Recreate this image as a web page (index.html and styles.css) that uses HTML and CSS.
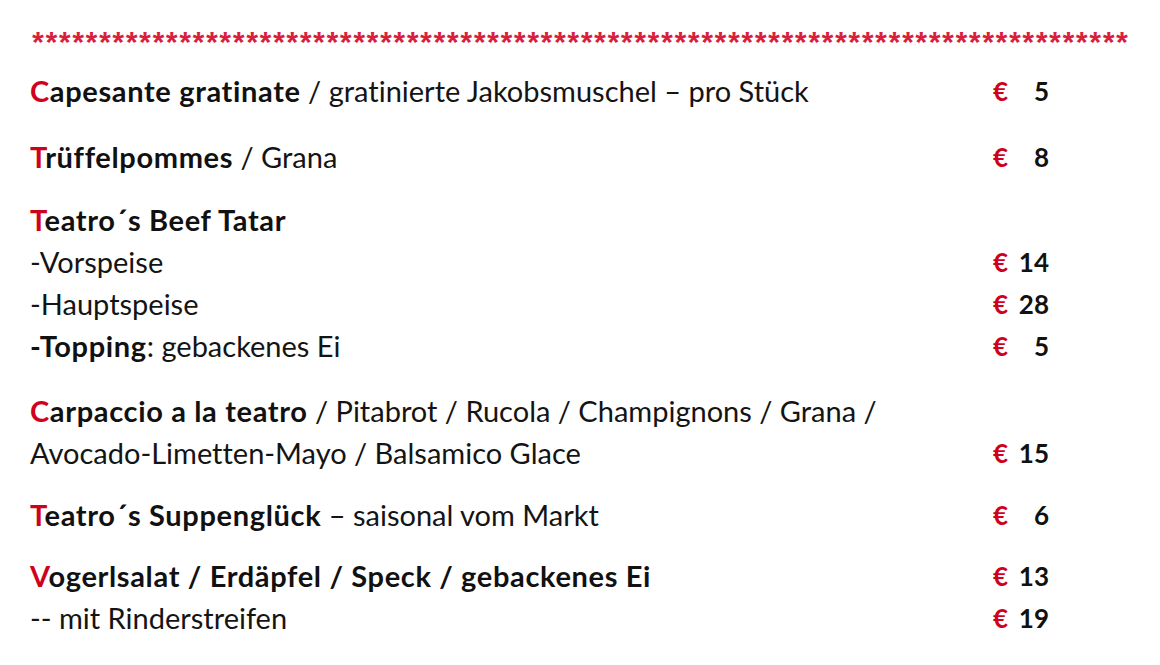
FILE: index.html
```html
<!DOCTYPE html>
<html lang="de">
<head>
<meta charset="utf-8">
<link rel="stylesheet" href="styles.css">
</head>
<body>
<div class="page">
  <div class="stars">**********************************************************************************</div>
  <div class="menu">
    <div class="item g1">
      <div class="row"><span class="name"><b><span class="ini">C</span>apesante gratinate</b> / gratinierte Jakobsmuschel – pro Stück</span><span class="price"><span class="eur">€</span><span class="num">5</span></span></div>
    </div>
    <div class="item g2">
      <div class="row"><span class="name"><b><span class="ini">T</span>rüffelpommes</b> / Grana</span><span class="price"><span class="eur">€</span><span class="num">8</span></span></div>
    </div>
    <div class="item g3">
      <div class="row"><span class="name"><b><span class="ini">T</span>eatro´s Beef Tatar</b></span></div>
      <div class="row"><span class="name">-Vorspeise</span><span class="price"><span class="eur">€</span><span class="num">14</span></span></div>
      <div class="row"><span class="name">-Hauptspeise</span><span class="price"><span class="eur">€</span><span class="num">28</span></span></div>
      <div class="row"><span class="name"><b>-Topping</b>: gebackenes Ei</span><span class="price"><span class="eur">€</span><span class="num">5</span></span></div>
    </div>
    <div class="item g4">
      <div class="row"><span class="name"><b><span class="ini">C</span>arpaccio a la teatro</b> / Pitabrot / Rucola / Champignons / Grana /</span></div>
      <div class="row"><span class="name">Avocado-Limetten-Mayo / Balsamico Glace</span><span class="price"><span class="eur">€</span><span class="num">15</span></span></div>
    </div>
    <div class="item g5">
      <div class="row"><span class="name"><b><span class="ini">T</span>eatro´s Suppenglück</b> – saisonal vom Markt</span><span class="price"><span class="eur">€</span><span class="num">6</span></span></div>
    </div>
    <div class="item g6">
      <div class="row"><span class="name"><b><span class="ini">V</span>ogerlsalat / Erdäpfel / Speck / gebackenes Ei</b></span><span class="price"><span class="eur">€</span><span class="num">13</span></span></div>
      <div class="row"><span class="name">-- mit Rinderstreifen</span><span class="price"><span class="eur">€</span><span class="num">19</span></span></div>
    </div>
  </div>
</div>
</body>
</html>
```
FILE: styles.css
```css
html, body {
  margin: 0;
  padding: 0;
  background: #ffffff;
}
body {
  font-family: Lato, "Open Sans", sans-serif;
  color: #141414;
  font-variant-ligatures: none;
}
.page {
  padding: 24px 0 0 30px;
  width: 1110px;
}
.stars {
  font-family: "Liberation Mono", monospace;
  font-size: 30px;
  font-weight: 700;
  letter-spacing: -4.62px;
  line-height: 32px;
  height: 32px;
  padding-top: 6px;
  margin-bottom: -6px;
  margin-left: -1px;
  color: #d8203c;
  white-space: nowrap;
}
.menu {
  font-size: 29px;
  line-height: 42px;
}
.item.g1 { margin-top: 14px; }
.item.g2 { margin-top: 24px; }
.item.g3 { margin-top: 21px; }
.item.g4 { margin-top: 23px; }
.item.g5 { margin-top: 20px; }
.item.g6 { margin-top: 19px; }
.row {
  display: flex;
  height: 42px;
}
.name {
  flex: 0 0 963px;
  white-space: nowrap;
}
b { font-weight: 700; color: #111; letter-spacing: 0.65px; }
.ini { color: #d0021b; }
.price {
  display: flex;
  font-weight: 700;
  font-size: 26px;
}
.eur {
  color: #d0021b;
  width: 22px;
}
.num {
  width: 34px;
  text-align: right;
  color: #111;
}
```
